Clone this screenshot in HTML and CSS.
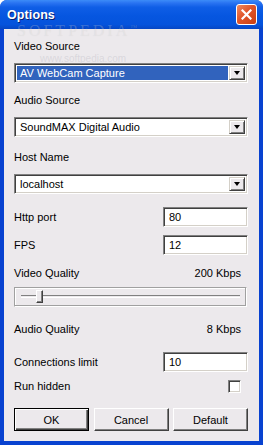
FILE: index.html
```html
<!DOCTYPE html>
<html lang="en">
<head>
	<meta charset="UTF-8">
	<title>Options</title>
	<link rel="stylesheet" href="styles.css">
</head>
<body>
	<div class="window">
		<div class="titlebar">
			<span class="title">Options</span>
			<span class="close">
				<svg width="11" height="11" viewBox="0 0 11 11"><path d="M1.5 1.5 L9.5 9.5 M9.5 1.5 L1.5 9.5" stroke="#fff" stroke-width="2.2" stroke-linecap="square"/></svg>
			</span>
		</div>
		<div class="client">
			<div class="label first">Video Source</div>
			<div class="combo selected">
				<span class="combo-text">AV WebCam Capture</span>
				<span class="drop"><i></i></span>
			</div>
			<div class="label gap11">Audio Source</div>
			<div class="combo">
				<span class="combo-text">SoundMAX Digital Audio</span>
				<span class="drop"><i></i></span>
			</div>
			<div class="label gap14">Host Name</div>
			<div class="combo">
				<span class="combo-text">localhost</span>
				<span class="drop"><i></i></span>
			</div>
			<div class="row gap13">
				<span>Http port</span>
				<span class="edit">80</span>
			</div>
			<div class="row gap8">
				<span>FPS</span>
				<span class="edit">12</span>
			</div>
			<div class="label-row gap12">
				<span>Video Quality</span>
				<span>200 Kbps</span>
			</div>
			<div class="slider">
				<div class="track"></div>
				<div class="thumb"></div>
			</div>
			<div class="label-row gap16">
				<span>Audio Quality</span>
				<span>8 Kbps</span>
			</div>
			<div class="row gap16">
				<span>Connections limit</span>
				<span class="edit">10</span>
			</div>
			<div class="label-row gap8">
				<span>Run hidden</span>
				<span class="check"></span>
			</div>
			<div class="buttons">
				<button class="btn default-btn">OK</button>
				<button class="btn">Cancel</button>
				<button class="btn">Default</button>
			</div>
		</div>
		<div class="watermark">SOFTPEDIA<sup>™</sup></div>
		<div class="watermark-url">www.softpedia.com</div>
	</div>
</body>
</html>
```

FILE: styles.css
```css
body {
	margin: 0;
	padding: 0;
	font-family: 'Liberation Sans', Arial, sans-serif;
	font-size: 11px;
	color: #000;
	background: #fff;
}

.window {
	position: relative;
	width: 263px;
	height: 445px;
	box-sizing: border-box;
	background: #0842d0;
	border-radius: 7px 7px 0 0;
	display: flex;
	flex-direction: column;
	overflow: hidden;
}

.titlebar {
	height: 29px;
	flex: none;
	display: flex;
	align-items: center;
	justify-content: space-between;
	padding: 0 6px 0 7px;
	background: linear-gradient(#3c8cf8 0%, #2a74f2 10%, #0f5ee6 25%, #0656e0 55%, #0553dc 85%, #0646c4 100%);
}

.title {
	color: #fff;
	font-weight: bold;
	font-size: 12.5px;
	line-height: 14px;
	text-shadow: 1px 1px 0 #0a1e6e;
	letter-spacing: 0.1px;
}

.close {
	width: 19px;
	height: 19px;
	border: 1px solid #fff;
	border-radius: 3px;
	background: linear-gradient(135deg, #f08a60 0%, #e0552a 45%, #c83e12 100%);
	display: flex;
	align-items: center;
	justify-content: center;
}

.client {
	flex: 1;
	margin: 0 4px 4px 4px;
	padding: 11px 11px 0 10px;
	background: #ece9ec;
	display: flex;
	flex-direction: column;
}

.label {
	height: 13px;
	line-height: 13px;
}

.first {
	margin-bottom: 10px;
}

.gap8 { margin-top: 8px; }
.gap11 { margin-top: 11px; margin-bottom: 10px; }
.gap12 { margin-top: 12px; }
.gap13 { margin-top: 13px; }
.gap14 { margin-top: 14px; margin-bottom: 10px; }
.gap16 { margin-top: 16px; }

.combo {
	height: 20px;
	box-sizing: border-box;
	border-top: 1px solid #808080;
	border-left: 1px solid #808080;
	border-right: 1px solid #fff;
	border-bottom: 1px solid #fff;
	box-shadow: inset 1px 1px #404040, inset -1px -1px #d4d0c8;
	background: #fff;
	display: flex;
	align-items: stretch;
	padding: 2px;
}

.combo-text {
	flex: 1;
	line-height: 14px;
	padding-left: 3px;
}

.combo.selected .combo-text {
	background: #3163bd;
	color: #fff;
	margin-right: 1px;
}

.drop {
	width: 16px;
	box-sizing: border-box;
	background: #ece9ec;
	border-top: 1px solid #d4d0c8;
	border-left: 1px solid #d4d0c8;
	border-right: 1px solid #404040;
	border-bottom: 1px solid #404040;
	box-shadow: inset 1px 1px #fff, inset -1px -1px #808080;
	display: flex;
	align-items: center;
	justify-content: center;
}

.drop i {
	width: 0;
	height: 0;
	border-left: 3.5px solid transparent;
	border-right: 3.5px solid transparent;
	border-top: 4px solid #000;
}

.row {
	height: 20px;
	display: flex;
	align-items: center;
	justify-content: space-between;
}

.edit {
	width: 85px;
	height: 20px;
	box-sizing: border-box;
	border-top: 1px solid #808080;
	border-left: 1px solid #808080;
	border-right: 1px solid #fff;
	border-bottom: 1px solid #fff;
	box-shadow: inset 1px 1px #404040, inset -1px -1px #d4d0c8;
	background: #fff;
	line-height: 18px;
	padding-left: 5px;
}

.label-row {
	height: 13px;
	line-height: 13px;
	display: flex;
	justify-content: space-between;
	align-items: center;
	padding-right: 7px;
}

.slider {
	position: relative;
	margin-top: 7px;
	height: 20px;
	width: 233px;
	box-sizing: border-box;
	border-top: 1px solid #a0a0a0;
	border-left: 1px solid #a0a0a0;
	border-right: 1px solid #fff;
	border-bottom: 1px solid #fff;
	box-shadow: inset -1px -1px #a0a0a0, inset 1px 1px #fff;
}

.track {
	position: absolute;
	left: 6px;
	right: 6px;
	top: 7px;
	height: 1px;
	border-top: 1px solid #808080;
	border-bottom: 1px solid #fff;
}

.thumb {
	position: absolute;
	left: 21px;
	top: 2px;
	width: 7px;
	height: 13px;
	box-sizing: border-box;
	background: #ece9ec;
	border-top: 1px solid #fff;
	border-left: 1px solid #fff;
	border-right: 1px solid #404040;
	border-bottom: 1px solid #404040;
	box-shadow: inset -1px -1px #808080;
}

.check {
	width: 13px;
	height: 13px;
	box-sizing: border-box;
	border-top: 1px solid #808080;
	border-left: 1px solid #808080;
	border-right: 1px solid #fff;
	border-bottom: 1px solid #fff;
	box-shadow: inset 1px 1px #404040, inset -1px -1px #d4d0c8;
	background: #fff;
}

.buttons {
	margin-top: 15px;
	display: flex;
	justify-content: space-between;
}

.btn {
	width: 75px;
	height: 23px;
	box-sizing: border-box;
	font-family: 'Liberation Sans', Arial, sans-serif;
	font-size: 11px;
	color: #000;
	background: #ece9ec;
	border-top: 1px solid #fff;
	border-left: 1px solid #fff;
	border-right: 1px solid #404040;
	border-bottom: 1px solid #404040;
	box-shadow: inset -1px -1px #808080;
	padding: 0;
}

.default-btn {
	border: 1px solid #000;
	box-shadow: inset 1px 1px #fff, inset -1px -1px #404040, inset -2px -2px #808080;
}

.watermark {
	position: absolute;
	left: 17px;
	top: 22px;
	font-family: 'Liberation Serif', serif;
	font-size: 16px;
	line-height: 18px;
	letter-spacing: 3px;
	color: rgba(255, 255, 255, 0.22);
	text-shadow: 0 0 1px rgba(0, 0, 0, 0.08);
	pointer-events: none;
}

.watermark sup {
	font-size: 7px;
	line-height: 0;
}

.watermark-url {
	position: absolute;
	left: 40px;
	top: 54px;
	font-family: 'Liberation Sans', sans-serif;
	font-size: 10px;
	line-height: 9px;
	color: rgba(180, 180, 190, 0.35);
	pointer-events: none;
}
```
